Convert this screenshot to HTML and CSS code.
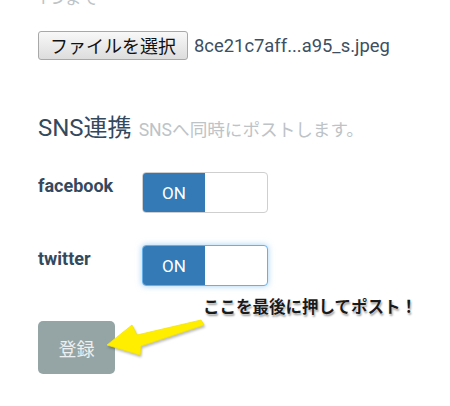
FILE: index.html
```html
<!DOCTYPE html>
<html lang="ja">
<head>
<meta charset="utf-8">
<link rel="stylesheet" href="styles.css">
</head>
<body>
<div class="page">
  <div class="note">1つまで</div>
  <div class="file-row">
    <button class="file-btn" type="button">ファイルを選択</button>
    <span class="file-name">8ce21c7aff...a95_s.jpeg</span>
  </div>
  <div class="heading">
    <span class="heading-main">SNS連携</span>
    <span class="heading-sub">SNSへ同時にポストします。</span>
  </div>
  <div class="row">
    <div class="label">facebook</div>
    <div class="switch"><span class="switch-on">ON</span><span class="switch-off"></span></div>
  </div>
  <div class="row row-second">
    <div class="label">twitter</div>
    <div class="switch switch-focus"><span class="switch-on">ON</span><span class="switch-off"></span></div>
  </div>
  <div class="submit-area">
    <button class="submit-btn" type="button">登録</button>
    <svg class="arrow" width="110" height="45" viewBox="100 315 110 45">
      <polygon points="107,345 132,325 137,335 201,320 204,325 141,346 140,355" fill="#ffee00" stroke="#f5e400" stroke-width="0.8" stroke-linejoin="round"/>
    </svg>
    <div class="callout">ここを最後に押してポスト！</div>
  </div>
</div>
</body>
</html>
```

FILE: styles.css
```css
html, body {
  margin: 0;
  padding: 0;
  background: #ffffff;
}
body {
  font-family: Roboto, "Noto Sans CJK JP", sans-serif;
  color: #34495e;
  overflow: hidden;
  height: 406px;
}
.page {
  padding-left: 38px;
}
.note {
  margin-top: -12px;
  height: 20px;
  font-size: 17px;
  line-height: 20px;
  color: #bdc3c7;
}
.file-row {
  margin-top: 23px;
  display: flex;
  align-items: center;
  height: 29px;
}
.file-btn {
  box-sizing: border-box;
  width: 150px;
  height: 29px;
  padding: 0;
  margin: 0;
  border: 1px solid #a8a8a8;
  border-radius: 3px;
  background: linear-gradient(#f8f8f8, #dddddd);
  font-family: "Noto Sans CJK JP", sans-serif;
  font-size: 18px;
  line-height: 27px;
  color: #111;
}
.file-name {
  margin-left: 6px;
  font-size: 18.4px;
  color: #3d4f61;
}
.heading {
  margin-top: 54px;
  display: flex;
  align-items: baseline;
  line-height: 28px;
  height: 28px;
}
.heading-main {
  font-size: 24px;
  color: #34495e;
}
.heading-sub {
  margin-left: 7px;
  font-size: 17.6px;
  color: #bdc3c7;
}
.row {
  margin-top: 30px;
  display: flex;
  align-items: flex-start;
  height: 41px;
}
.row-second {
  margin-top: 32px;
}
.label {
  width: 104px;
  padding-top: 2px;
  font-size: 18px;
  line-height: 24px;
  font-weight: bold;
  color: #34495e;
}
.switch {
  box-sizing: border-box;
  width: 126px;
  height: 41px;
  border: 1px solid #cfcfcf;
  border-radius: 4px;
  overflow: hidden;
  display: flex;
  background: #fff;
}
.switch-focus {
  border-color: #66afe9;
  box-shadow: 0 0 6px rgba(102, 175, 233, 0.6);
}
.switch-on {
  width: 62px;
  background: #337ab7;
  color: #ffffff;
  font-size: 17px;
  display: flex;
  align-items: center;
  justify-content: center;
}
.switch-off {
  flex: 1;
}
.submit-area {
  position: relative;
  margin-top: 35px;
}
.submit-btn {
  width: 77px;
  height: 53px;
  border: none;
  border-radius: 5px;
  background: #95a5a6;
  color: #ecf0f1;
  font-family: "Noto Sans CJK JP", sans-serif;
  font-size: 18px;
  padding: 0;
  margin: 0;
}
.arrow {
  position: absolute;
  left: 62px;
  top: -6px;
  filter: drop-shadow(1px 2px 1px rgba(0,0,0,0.25));
}
.callout {
  position: absolute;
  left: 165px;
  top: -25px;
  white-space: nowrap;
  font-family: "Noto Sans CJK JP", sans-serif;
  font-weight: bold;
  font-size: 16.5px;
  line-height: 20px;
  color: #1a1a1a;
  text-shadow: 0 0 2px #fff, 1px 2px 2px rgba(0,0,0,0.4);
}
```
